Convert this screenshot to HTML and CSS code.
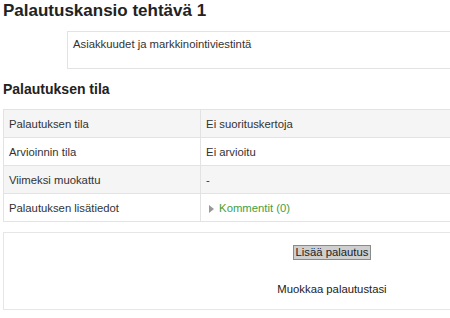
FILE: index.html
```html
<!DOCTYPE html>
<html lang="fi">
<head>
<meta charset="utf-8">
<title>Palautuskansio tehtävä 1</title>
<link rel="stylesheet" href="styles.css">
</head>
<body>
<div class="frame">
<div class="page">
  <h2 class="title">Palautuskansio tehtävä 1</h2>
  <div class="intro">Asiakkuudet ja markkinointiviestintä</div>
  <h3 class="section">Palautuksen tila</h3>
  <table class="status">
    <tr class="odd"><td class="label">Palautuksen tila</td><td>Ei suorituskertoja</td></tr>
    <tr><td class="label">Arvioinnin tila</td><td>Ei arvioitu</td></tr>
    <tr class="odd"><td class="label">Viimeksi muokattu</td><td>-</td></tr>
    <tr><td class="label">Palautuksen lisätiedot</td><td><span class="comments"><span class="tri"></span>Kommentit (0)</span></td></tr>
  </table>
  <div class="actions">
    <button class="btn" type="button">Lisää palautus</button>
    <p class="hint">Muokkaa palautustasi</p>
  </div>
</div>
</div>
</body>
</html>
```

FILE: styles.css
```css
html, body {
  margin: 0;
  padding: 0;
  overflow: hidden;
  background: #fff;
}
body {
  font-family: "Liberation Sans", Arial, sans-serif;
  color: #333;
  font-size: 11.3px;
}
.frame {
  width: 100%;
  overflow: hidden;
}
.page {
  width: 658px;
  padding: 0 3px;
}
.title {
  margin: 0;
  font-size: 17px;
  line-height: 22px;
  font-weight: bold;
  color: #222;
}
.intro {
  margin: 9px 0 0 64px;
  height: 28px;
  padding: 4px 5px;
  border: 1px solid #e3e3e3;
  line-height: 16px;
}
.section {
  margin: 11px 0 0;
  font-size: 14px;
  line-height: 18px;
  font-weight: bold;
  color: #222;
}
.status {
  margin-top: 11px;
  width: 100%;
  border-collapse: collapse;
  border: 1px solid #e3e3e3;
}
.status td {
  height: 27px;
  padding: 0 5px;
  border-top: 1px solid #e3e3e3;
  vertical-align: middle;
  line-height: 16px;
}
.status td.label {
  width: 30%;
  border-right: 1px solid #e3e3e3;
}
.status tr.odd td {
  background: #f5f5f5;
}
.comments {
  color: #3fa13f;
  padding-left: 3px;
}
.tri {
  display: inline-block;
  width: 0;
  height: 0;
  border-top: 4px solid transparent;
  border-bottom: 4px solid transparent;
  border-left: 5px solid #999;
  margin-right: 5px;
  vertical-align: -1px;
}
.actions {
  margin-top: 10px;
  border: 1px solid #e6e6e6;
  height: 76px;
  text-align: center;
}
.btn {
  margin-top: 12px;
  font-family: "Liberation Sans", Arial, sans-serif;
  font-size: 11.3px;
  line-height: 13px;
  color: #222;
  background: #cfcfcf;
  border: 1px solid #8a8a8a;
  border-radius: 0;
  padding: 0 2px;
}
.hint {
  margin: 21px 0 0;
  line-height: 16px;
  color: #222;
}
```
